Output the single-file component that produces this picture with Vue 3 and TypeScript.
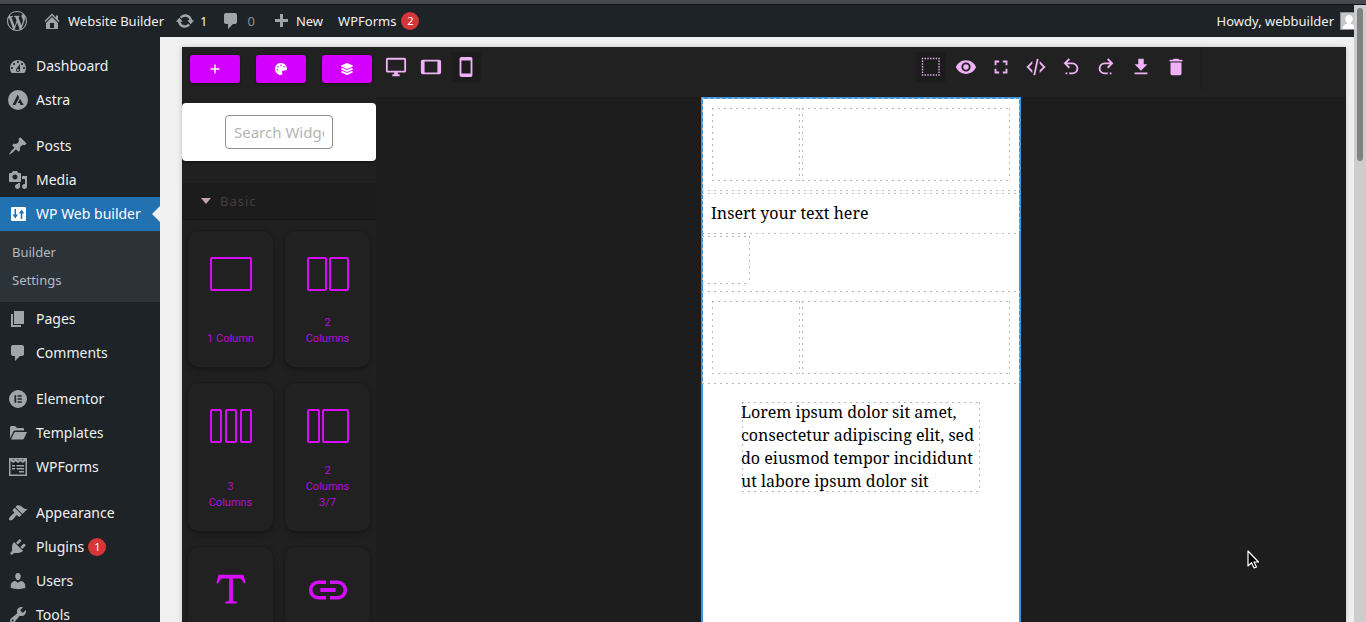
<script setup lang="ts">
import { ref } from 'vue'

interface Shape { d: string; box?: string }
interface MenuItem { label: string; icon: string; active?: boolean; badge?: number; children?: string[] }
interface Rect { x: number; w: number }
interface Block { label: string; cols?: Rect[]; d?: string }

const dash: Record<string, Shape> = {
  wordpress: { d: 'M20 10c0-5.51-4.49-10-10-10C4.48 0 0 4.49 0 10c0 5.52 4.48 10 10 10 5.51 0 10-4.48 10-10zM7.78 15.37L4.37 6.22c.55-.02 1.17-.08 1.17-.08.5-.06.44-1.13-.06-1.11 0 0-1.45.11-2.37.11-.18 0-.37 0-.58-.01C4.12 2.69 6.87 1.11 10 1.11c2.33 0 4.45.87 6.05 2.34-.68-.11-1.65.39-1.65 1.58 0 .74.45 1.36.9 2.1.35.61.55 1.36.55 2.46 0 1.49-1.4 5-1.4 5l-3.03-8.37c.54-.02.82-.17.82-.17.5-.05.44-1.25-.06-1.22 0 0-1.44.12-2.38.12-.87 0-2.33-.12-2.33-.12-.5-.03-.56 1.2-.06 1.22l.92.08 1.26 3.41zM17.41 10c.24-.64.74-1.87.43-4.25.7 1.29 1.05 2.71 1.05 4.25 0 3.29-1.73 6.24-4.4 7.78.97-2.59 1.94-5.2 2.92-7.78zM6.1 18.09C3.12 16.65 1.11 13.53 1.11 10c0-1.3.23-2.48.72-3.59C3.25 10.3 4.67 14.2 6.1 18.09zm4.03-6.63l2.58 6.98c-.86.29-1.76.45-2.71.45-.79 0-1.57-.11-2.29-.33.81-2.38 1.62-4.74 2.42-7.1z' },
  home: { d: 'M16 8.5l1.53 1.53-1.06 1.06L10 4.6l-6.47 6.49-1.06-1.06L10 2.5l4 4v-2h2v4zm-6-2.46l6 5.99V18H4v-5.97zM12 17v-5H8v5h4z' },
  update: { d: 'M10.2 3.28c3.53 0 6.43 2.61 6.92 6h2.08l-3.5 4-3.5-4h2.32c-.45-1.97-2.21-3.45-4.32-3.45-1.45 0-2.73.71-3.54 1.78L4.95 5.66C6.23 4.2 8.11 3.28 10.2 3.28zm-.4 13.44c-3.52 0-6.43-2.61-6.92-6H.8l3.5-4c1.17 1.33 2.33 2.67 3.5 4H5.48c.45 1.97 2.21 3.45 4.32 3.45 1.45 0 2.73-.71 3.54-1.78l1.71 1.95c-1.28 1.46-3.15 2.38-5.25 2.38z' },
  comments: { d: 'M5 2h9c1.1 0 2 .9 2 2v7c0 1.1-.9 2-2 2h-2l-5 5v-5H5c-1.1 0-2-.9-2-2V4c0-1.1.9-2 2-2z' },
  plus: { d: 'M17 8v3h-5v5H9v-5H4V8h5V3h3v5h5z' },
  dashboard: { d: 'M3.76 17h12.48c1.1-1.37 1.76-3.11 1.76-5 0-4.42-3.58-8-8-8s-8 3.58-8 8c0 1.89.66 3.63 1.76 5zM10 5c.55 0 1 .45 1 1s-.45 1-1 1-1-.45-1-1 .45-1 1-1zM6 7c.55 0 1 .45 1 1s-.45 1-1 1-1-.45-1-1 .45-1 1-1zm8 0c.55 0 1 .45 1 1s-.45 1-1 1-1-.45-1-1 .45-1 1-1zm-5.37 5.55L12 8v6c0 1.1-.9 2-2 2s-2-.9-2-2c0-.57.24-1.08.63-1.45zM4 11c.55 0 1 .45 1 1s-.45 1-1 1-1-.45-1-1 .45-1 1-1zm12 0c.55 0 1 .45 1 1s-.45 1-1 1-1-.45-1-1 .45-1 1-1zm-5 3c0-.55-.45-1-1-1s-1 .45-1 1 .45 1 1 1 1-.45 1-1z' },
  astra: { d: 'M10 0a10 10 0 1 0 0 20a10 10 0 0 0 0-20zM9.7 4.6l1.5 3.1L7.4 15H4.5zM12 8.8l3.6 6.2h-3l-.9-1.9H9.8z' },
  posts: { d: 'M10.44 3.02l1.82-1.82 6.36 6.35-1.83 1.82c-1.05-.68-2.48-.57-3.41.36l-.75.75c-.92.93-1.04 2.35-.35 3.41l-1.83 1.82-2.41-2.41-2.8 2.79c-.42.42-3.38 2.71-3.8 2.29s1.86-3.39 2.28-3.81l2.79-2.79L4.1 9.36l1.83-1.82c1.05.69 2.48.57 3.4-.36l.75-.75c.93-.92 1.05-2.35.36-3.41z' },
  media: { d: 'M13 11V4c0-.55-.45-1-1-1h-1.67L9 1H5L3.67 3H2c-.55 0-1 .45-1 1v7c0 .55.45 1 1 1h10c.55 0 1-.45 1-1zM7 4.5c1.38 0 2.5 1.12 2.5 2.5S8.38 9.5 7 9.5 4.5 8.38 4.5 7 5.62 4.5 7 4.5zM14 6h5v10.5c0 1.38-1.12 2.5-2.5 2.5S14 17.88 14 16.5s1.12-2.5 2.5-2.5c.17 0 .34.02.5.05V9h-3V6zm-4 8.05V13h2v3.5c0 1.38-1.12 2.5-2.5 2.5S7 17.88 7 16.5 8.12 14 9.5 14c.17 0 .34.02.5.05z' },
  builder: { d: 'M4 3h13a1 1 0 0 1 1 1v12a1 1 0 0 1-1 1H4a1 1 0 0 1-1-1V4a1 1 0 0 1 1-1zM6.500 5v5.500H4.500L7.300 14.500 10 10.500H8V5zM13.500 5.500L10.800 9.500h2V15h1.500V9.500h2z' },
  pages: { d: 'M6 15V2h10v13H6zm-1 1h8v2H3V5h2v11z' },
  elementor: { d: 'M10 1a9 9 0 1 0 0 18a9 9 0 0 0 0-18zM6.500 6.200h1.700v7.600H6.500zM9.600 6.200h4.200v1.600H9.600zM9.600 9.200h4.200v1.600H9.600zM9.600 12.200h4.200v1.600H9.600z' },
  templates: { d: 'M2 15.500V4.500Q2 3 3.500 3H7l2 2h6q1 0 1 1v1.500H7.500Q6 7.500 5.200 8.800zM3 16.500L6 10q.5-1 1.600-1H19l-3 6.500q-.5 1-1.600 1z' },
  wpforms: { d: 'M1 1h18v18H1zM2.500 4v13.500h15V4l-2.800 2L12.500 4.200 10 6 7.500 4.200 5.300 6zM4.200 2.500l1.200 1 1.400-1zM8.500 2.500l1.500 1 1.500-1zM13.200 2.500l1.400 1 1.200-1zM4 8h3v1.500H4zM8.500 8H16v1.500H8.500zM4 11h3v1.500H4zM8.500 11H16v1.500H8.500zM11 14h5v1.500h-5z' },
  appearance: { d: 'M14.48 11.06L7.41 3.99l1.5-1.5c.5-.56 2.3-.47 3.51.32 1.21.8 1.43 1.28 2.91 2.1 1.18.64 2.45 1.26 4.45.85zm-.71.71L6.7 4.7 4.93 6.47c-.39.39-.39 1.02 0 1.41l1.06 1.06c.39.39.39 1.03 0 1.42-.6.6-1.43 1.11-2.21 1.69-.35.26-.7.53-1.01.84C1.43 14.23.4 16.08 1.4 17.07c.99 1 2.84-.03 4.18-1.36.31-.31.58-.66.85-1.02.57-.78 1.08-1.61 1.69-2.21.39-.39 1.02-.39 1.41 0l1.06 1.06c.39.39 1.02.39 1.41 0z' },
  plugins: { d: 'M13.11 4.36L9.87 7.6 8 5.73l3.24-3.24c.35-.34 1.05-.2 1.56.32.52.51.66 1.21.31 1.55zm-8 1.77l.91-1.12 9.01 9.01-1.19.84c-.71.71-2.63 1.16-3.82 1.16H6.14L4.9 17.26c-.59.59-1.54.59-2.12 0-.59-.58-.59-1.53 0-2.12l1.24-1.24v-3.88c0-1.13.4-3.19 1.09-3.89zm7.26 3.97l3.24-3.24c.34-.35 1.04-.21 1.55.31.52.51.66 1.21.31 1.55l-3.24 3.25z' },
  users: { d: 'M10 9.25c-2.27 0-2.73-3.44-2.73-3.44C7 4.02 7.82 2 9.97 2c2.16 0 2.98 2.02 2.71 3.81 0 0-.41 3.44-2.68 3.44zm0 2.57L12.72 10c2.39 0 4.52 2.33 4.52 4.53v2.49s-3.65 1.13-7.24 1.13c-3.65 0-7.24-1.13-7.24-1.13v-2.49c0-2.25 1.94-4.48 4.47-4.48z' },
  tools: { d: 'M16.68 9.77c-1.34 1.34-3.3 1.67-4.95.99l-5.41 6.52c-.99.99-2.59.99-3.58 0s-.99-2.59 0-3.57l6.52-5.42c-.68-1.65-.35-3.61.99-4.95 1.28-1.28 3.12-1.62 4.72-1.06l-2.89 2.89 2.82 2.82 2.86-2.87c.53 1.58.18 3.39-1.08 4.65zM3.81 16.21c.4.39 1.04.39 1.43 0 .4-.4.4-1.04 0-1.43-.39-.4-1.03-.4-1.43 0-.39.39-.39 1.03 0 1.43z' },
}

const groups: MenuItem[][] = [
  [{ label: 'Dashboard', icon: 'dashboard' }, { label: 'Astra', icon: 'astra' }],
  [
    { label: 'Posts', icon: 'posts' },
    { label: 'Media', icon: 'media' },
    { label: 'WP Web builder', icon: 'builder', active: true, children: ['Builder', 'Settings'] },
    { label: 'Pages', icon: 'pages' },
    { label: 'Comments', icon: 'comments' },
  ],
  [{ label: 'Elementor', icon: 'elementor' }, { label: 'Templates', icon: 'templates' }, { label: 'WPForms', icon: 'wpforms' }],
  [
    { label: 'Appearance', icon: 'appearance' },
    { label: 'Plugins', icon: 'plugins', badge: 1 },
    { label: 'Users', icon: 'users' },
    { label: 'Tools', icon: 'tools' },
  ],
]

const panelButtons = [
  { name: 'Add block', box: '0 0 448 512', d: 'M416 226H254V64h-60v162H32v60h162v162h60V286h162z' },
  { name: 'Styles', box: '0 0 512 512', d: 'M204.3 5C104.9 24.4 24.8 104.3 5.2 203.4c-37 187 131.7 326.4 258.8 306.7 41.2-6.4 61.4-54.6 42.5-91.7-23.1-45.4 9.9-98.4 60.9-98.4h79.7c35.8 0 64.8-29.6 64.9-65.3C511.5 97.1 368.1-26.9 204.3 5zM96 320c-17.7 0-32-14.3-32-32s14.3-32 32-32 32 14.3 32 32-14.3 32-32 32zm32-128c-17.7 0-32-14.3-32-32s14.3-32 32-32 32 14.3 32 32-14.3 32-32 32zm128-64c-17.7 0-32-14.3-32-32s14.3-32 32-32 32 14.3 32 32-14.3 32-32 32zm128 64c-17.7 0-32-14.3-32-32s14.3-32 32-32 32 14.3 32 32-14.3 32-32 32z' },
  { name: 'Layers', box: '0 0 512 512', d: 'M12.41 148.02l232.94 105.67c6.8 3.09 14.49 3.09 21.29 0l232.94-105.67c16.55-7.51 16.55-32.52 0-40.03L266.65 2.31a25.607 25.607 0 0 0-21.29 0L12.41 107.98c-16.55 7.51-16.55 32.53 0 40.04zm487.18 88.28l-58.09-26.33-161.64 73.27c-7.56 3.43-15.59 5.17-23.86 5.17s-16.29-1.74-23.86-5.17L70.51 209.97l-58.1 26.33c-16.55 7.5-16.55 32.5 0 40l232.94 105.59c6.8 3.08 14.49 3.08 21.29 0L499.59 276.3c16.55-7.5 16.55-32.5 0-40zm0 127.8l-57.87-26.23-161.86 73.37c-7.56 3.43-15.59 5.17-23.86 5.17s-16.29-1.74-23.86-5.17L70.29 337.87 12.41 364.1c-16.55 7.5-16.55 32.5 0 40l232.94 105.59c6.8 3.08 14.49 3.08 21.29 0L499.59 404.1c16.55-7.5 16.55-32.5 0-40z' },
]

const devices = [
  { name: 'Desktop', d: 'M21,16H3V4H21M21,2H3C1.89,2 1,2.89 1,4V16A2,2 0 0,0 3,18H10V20H8V22H16V20H14V18H21A2,2 0 0,0 23,16V4C23,2.89 22.1,2 21,2Z' },
  { name: 'Tablet', d: 'M19,18H5V6H19M21,4H3C1.89,4 1,4.89 1,6V18A2,2 0 0,0 3,20H21A2,2 0 0,0 23,18V6C23,4.89 22.1,4 21,4Z' },
  { name: 'Mobile', d: 'M17,19H7V5H17M17,1H7C5.89,1 5,1.89 5,3V21A2,2 0 0,0 7,23H17A2,2 0 0,0 19,21V3C19,1.89 18.1,1 17,1Z' },
]
const device = ref('Mobile')

// Dotted square used for the "show borders" toggle
const dots = [3, 6, 9, 12, 15, 18, 21].map(n => `M${n - 1},2h1.500v1.500h-1.500zM${n - 1},20h1.500v1.500h-1.500zM2,${n - 1}h1.500v1.500h-1.500zM20,${n - 1}h1.500v1.500h-1.500z`).join('')

const actions = [
  { name: 'Borders', d: dots, on: true },
  { name: 'Preview', d: 'M12,9A3,3 0 0,0 9,12A3,3 0 0,0 12,15A3,3 0 0,0 15,12A3,3 0 0,0 12,9M12,17A5,5 0 0,1 7,12A5,5 0 0,1 12,7A5,5 0 0,1 17,12A5,5 0 0,1 12,17M12,4.5C7,4.5 2.73,7.61 1,12C2.73,16.39 7,19.5 12,19.5C17,19.5 21.27,16.39 23,12C21.27,7.61 17,4.5 12,4.5Z' },
  { name: 'Fullscreen', d: 'M5,5H10V7H7V10H5V5M14,5H19V10H17V7H14V5M17,14H19V19H14V17H17V14M10,17V19H5V14H7V17H10Z' },
  { name: 'Code', d: 'M12.89,3L14.85,3.4L11.11,21L9.15,20.6L12.89,3M19.59,12L16,8.41V5.58L22.42,12L16,18.41V15.58L19.59,12M1.58,12L8,5.58V8.41L4.41,12L8,15.58V18.41L1.58,12Z' },
  { name: 'Undo', d: 'M13.5,7A6.5,6.5 0 0,1 20,13.5A6.5,6.5 0 0,1 13.5,20H10V18H13.5C16,18 18,16 18,13.5C18,11 16,9 13.5,9H7.83L10.91,12.09L9.5,13.5L4,8L9.5,2.5L10.92,3.91L7.83,7H13.5M6,18H8V20H6V18Z' },
  { name: 'Redo', d: 'M10.5,7A6.5,6.5 0 0,0 4,13.5A6.5,6.5 0 0,0 10.5,20H14V18H10.5C8,18 6,16 6,13.5C6,11 8,9 10.5,9H16.17L13.09,12.09L14.5,13.5L20,8L14.5,2.5L13.08,3.91L16.17,7H10.5M18,18H16V20H18V18Z' },
  { name: 'Import', d: 'M5,20H19V18H5M19,9H15V3H9V9H5L12,16L19,9Z' },
  { name: 'Clear', d: 'M19,4H15.5L14.5,3H9.5L8.5,4H5V6H19M6,19A2,2 0 0,0 8,21H16A2,2 0 0,0 18,19V7H6V19Z' },
]

const blocks: Block[] = [
  { label: '1 Column', cols: [{ x: 3, w: 40 }] },
  { label: '2 Columns', cols: [{ x: 3, w: 18 }, { x: 25, w: 18 }] },
  { label: '3 Columns', cols: [{ x: 3, w: 10 }, { x: 18, w: 10 }, { x: 33, w: 10 }] },
  { label: '2 Columns 3/7', cols: [{ x: 3, w: 11 }, { x: 18, w: 25 }] },
  { label: 'Text', d: 'M18.5,4L19.66,8.35L18.7,8.61C18.25,7.74 17.79,6.87 17.26,6.43C16.73,6 16.11,6 15.5,6H13V16.5C13,17 13,17.5 13.33,17.75C13.67,18 14.33,18 15,18V19H9V18C9.67,18 10.33,18 10.67,17.75C11,17.5 11,17 11,16.5V6H8.5C7.89,6 7.27,6 6.74,6.43C6.21,6.87 5.75,7.74 5.3,8.61L4.34,8.35L5.5,4H18.5Z' },
  { label: 'Link', d: 'M3.9,12C3.9,10.29 5.29,8.9 7,8.9H11V7H7A5,5 0 0,0 2,12A5,5 0 0,0 7,17H11V15.1H7C5.29,15.1 3.9,13.71 3.9,12M8,13H16V11H8V13M17,7H13V8.9H17C18.71,8.9 20.1,10.29 20.1,12C20.1,13.71 18.71,15.1 17,15.1H13V17H17A5,5 0 0,0 22,12A5,5 0 0,0 17,7Z' },
]
const search = ref('')
const open = ref(true)
</script>

<template>
  <div class="app">
    <div class="chrome"></div>
    <div class="window">
      <div class="admin">
        <header class="bar">
          <a href="#" class="wp" aria-label="About WordPress"><svg viewBox="0 0 20 20"><path :d="dash.wordpress.d" /></svg></a>
          <a href="#" class="site"><svg viewBox="0 0 20 20"><path fill-rule="evenodd" :d="dash.home.d" /></svg>Website Builder</a>
          <a href="#" class="updates"><svg viewBox="0 0 20 20"><path :d="dash.update.d" /></svg>1</a>
          <a href="#" class="replies"><svg viewBox="0 0 20 20"><path :d="dash.comments.d" /></svg><span>0</span></a>
          <a href="#" class="new"><svg viewBox="0 0 20 20"><path :d="dash.plus.d" /></svg>New</a>
          <a href="#" class="forms">WPForms<span class="badge">2</span></a>
          <a href="#" class="account">Howdy, webbuilder
            <svg viewBox="0 0 18 18" class="avatar"><path fill="#8c8f94" d="M0 0h18v18H0z" /><path fill="#c4c6c7" d="M1 1h16v16H1z" /><path fill="#fff" d="M9 3a3.800 3.800 0 0 1 3.800 4c0 1.500-.8 3-1.800 3.700v1c2.500.6 4 1.800 4.500 5.300h-13c.5-3.500 2-4.700 4.500-5.300v-1C6 10 5.200 8.500 5.200 7A3.800 3.800 0 0 1 9 3z" /></svg>
          </a>
        </header>
        <div class="body">
          <nav class="menu">
            <ul v-for="(group, g) in groups" :key="g">
              <li v-for="item in group" :key="item.label">
                <a href="#" class="item" :class="{ active: item.active }">
                  <svg viewBox="0 0 20 20"><path fill-rule="evenodd" :d="dash[item.icon].d" /></svg>
                  <span>{{ item.label }}</span>
                  <span v-if="item.badge" class="badge">{{ item.badge }}</span>
                </a>
                <ul v-if="item.children" class="sub">
                  <li v-for="child in item.children" :key="child"><a href="#">{{ child }}</a></li>
                </ul>
              </li>
            </ul>
          </nav>

          <main class="content">
            <div class="editor">
              <div class="toolbar">
                <div class="switches">
                  <button v-for="b in panelButtons" :key="b.name" type="button" :aria-label="b.name">
                    <svg :viewBox="b.box"><path :d="b.d" /></svg>
                  </button>
                </div>
                <div class="tools">
                  <button v-for="d in devices" :key="d.name" type="button" :aria-label="d.name" :class="{ on: device === d.name }" @click="device = d.name">
                    <svg viewBox="0 0 24 24"><path fill-rule="evenodd" :d="d.d" /></svg>
                  </button>
                </div>
                <div class="tools actions">
                  <button v-for="a in actions" :key="a.name" type="button" :aria-label="a.name" :class="{ on: a.on }">
                    <svg viewBox="0 0 24 24"><path :d="a.d" /></svg>
                  </button>
                </div>
                <div class="views"></div>
              </div>

              <div class="work">
                <aside class="blocks">
                  <div class="search"><input v-model="search" type="text" placeholder="Search Widgets" aria-label="Search Widgets"></div>
                  <button type="button" class="category" @click="open = !open">
                    <svg viewBox="0 0 10 6"><path d="M0 0h10L5 6z" /></svg>Basic
                  </button>
                  <div v-if="open" class="grid">
                    <button v-for="b in blocks" :key="b.label" type="button" class="block" :aria-label="b.label">
                      <svg v-if="b.cols" viewBox="0 0 46 46"><rect v-for="c in b.cols" :key="c.x" :x="c.x" y="7" :width="c.w" height="32" rx="1" /></svg>
                      <svg v-else viewBox="0 0 24 24" class="solid"><path :d="b.d" /></svg>
                      <span v-if="b.cols">{{ b.label }}</span>
                    </button>
                  </div>
                </aside>
                <section class="canvas">
                  <div class="frame">
                    <div class="row dashed"><div class="cell narrow dashed"></div><div class="cell wide dashed"></div></div>
                    <div class="text dashed">Insert your text here</div>
                    <div class="strip"><div class="cell small dashed"></div></div>
                    <div class="row dashed"><div class="cell narrow dashed"></div><div class="cell wide dashed"></div></div>
                    <p class="quote dashed">Lorem ipsum dolor sit amet, consectetur adipiscing elit, sed do eiusmod tempor incididunt ut labore ipsum dolor sit</p>
                  </div>
                </section>
              </div>
            </div>
          </main>
        </div>
      </div>
      <div class="scroll"><div class="thumb"></div></div>
    </div>
    <svg class="pointer" viewBox="0 0 12 20"><path d="M1 1v15l3.500-3.300 2.600 5.300 2.400-1-2.600-5h4.600z" fill="#000" stroke="#fff" stroke-width="1.200" stroke-linejoin="round" /></svg>
  </div>
</template>

<style>
html, body { margin: 0; background: #1d2327; }
</style>

<style scoped>
* { box-sizing: border-box; }
.app { position: relative; height: 100vh; overflow: hidden; display: flex; flex-direction: column; font: 13px/18px "Noto Sans", sans-serif; color: #f0f0f1; }
a { color: inherit; text-decoration: none; }
ul { list-style: none; margin: 0; padding: 0; }
button { font: inherit; border: 0; padding: 0; background: none; color: inherit; cursor: pointer; }
svg { display: block; flex: none; fill: currentColor; }
.chrome { flex: none; height: 5px; background: #46494e; border-bottom: 1px solid #111517; }
.window { flex: 1; min-height: 0; display: flex; }
.admin { flex: 1; min-width: 0; display: flex; flex-direction: column; }

.bar { flex: none; height: 32px; background: #1d2327; display: flex; align-items: center; padding-left: 7px; overflow: hidden; }
.bar a { display: flex; align-items: center; white-space: nowrap; }
.bar svg { width: 20px; height: 20px; color: #a0a5aa; }
.bar .site { margin-left: 15px; gap: 6px; }
.bar .updates { margin-left: 11px; gap: 5px; }
.bar .replies { margin-left: 14px; gap: 6px; }
.bar .replies span { color: #8c8f94; }
.bar .new { margin-left: 16px; gap: 5px; }
.bar .forms { margin-left: 15px; gap: 5px; }
.bar .account { margin-left: auto; margin-right: -4px; gap: 6px; }
.bar .avatar { width: 18px; height: 18px; }
.badge { min-width: 18px; height: 18px; border-radius: 9px; background: #d63638; color: #fff; font-size: 11px; line-height: 18px; text-align: center; }

.body { flex: 1; min-height: 0; display: flex; }
.menu { flex: none; width: 160px; padding-top: 12px; background: #1d2327; font-size: 14px; overflow: hidden; display: flex; flex-direction: column; gap: 12px; }
.item { position: relative; display: flex; align-items: center; height: 34px; padding-left: 8px; }
.item svg { width: 20px; height: 20px; margin-right: 8px; color: #a0a5aa; }
.item .badge { margin-left: 4px; }
.item.active { background: #2271b1; color: #fff; }
.item.active svg { color: #fff; }
.item.active::after { content: ""; position: absolute; right: 0; border: 8px solid transparent; border-left: 0; border-right-color: #f0f0f1; }
.sub { background: #2c3338; padding: 7px 12px 8px; font-size: 13px; line-height: 28px; color: #b4b9be; }
.sub a { display: block; }

.content { flex: 1; min-width: 0; display: flex; background: #f0f0f1; padding: 10px 8px 0 22px; }
.editor { flex: 1; min-width: 0; display: flex; flex-direction: column; background: #1d1d1d; color: #f0b1f8; box-shadow: 0 0 5px rgba(0, 0, 0, .2); }
.toolbar { flex: none; height: 50px; display: flex; background: #212121; }
.switches { width: 194px; padding: 8px 4px 8px 8px; display: flex; gap: 16px; }
.switches button { width: 50px; height: 28px; border-radius: 3px; background: #d400ff; color: #fff; display: grid; place-items: center; box-shadow: 0 1px 3px rgba(0, 0, 0, .4); }
.switches svg { width: 12px; height: 12px; }
.tools { display: flex; gap: 5px; padding: 5px; }
.tools button { width: 30px; height: 30px; border-radius: 2px; display: grid; place-items: center; }
.tools .on { background: #1c1c1c; }
.tools svg { width: 22px; height: 22px; }
.actions { margin-left: auto; margin-right: 4px; }
.views { width: 146px; height: 43px; border-left: 2px solid #1f1f1f; border-bottom: 1px solid #1f1f1f; }
.work { flex: 1; min-height: 0; display: flex; }

.blocks { flex: none; width: 194px; padding-top: 6px; background: #202020; overflow: hidden; }
.search { height: 58px; margin-bottom: 22px; background: #fff; border-radius: 4px; display: grid; place-items: center; box-shadow: 0 1px 3px rgba(0, 0, 0, .5); }
.search input { width: 108px; height: 34px; padding: 0 8px; border: 1px solid #8c8f94; border-radius: 4px; background: #fff; font: 15px/24px "Noto Sans", sans-serif; color: #2c3338; }
.search input::placeholder { color: #b5b5b5; opacity: 1; }
.category { width: 100%; height: 37px; padding-left: 19px; display: flex; align-items: center; gap: 9px; background: #1c1c1c; border-bottom: 1px solid #171717; color: #453e3e; letter-spacing: 1px; }
.category svg { width: 10px; height: 6px; color: #c7a3a3; }
.grid { display: grid; grid-template-columns: 1fr 1fr; gap: 16px 12px; padding: 11px 6px; }
.block { min-height: 136px; padding: 20px 19px; border-radius: 10px; background: #212121; color: #d50dfb; box-shadow: 0 3px 6px rgba(0, 0, 0, .3), 0 0 2px rgba(0, 0, 0, .2); display: flex; flex-direction: column; justify-content: space-between; align-items: center; gap: 14px; }
.block svg { width: 46px; height: 46px; fill: none; stroke: currentColor; stroke-width: 2; }
.block .solid { fill: currentColor; stroke: none; }
.block span { font: 11px/16px Roboto, "Liberation Sans", sans-serif; color: #b70bd8; }

.canvas { flex: 1; display: flex; justify-content: center; overflow: hidden; }
.frame { width: 320px; background: #fff; box-shadow: inset 2px 0 #3b97e3, inset -2px 0 #3b97e3, inset 0 2px #3b97e3; color: #000; font: 16px/23px "Noto Serif", "Droid Serif", "DejaVu Serif", serif; }
.dashed { position: relative; }
.dashed::after {
  content: "";
  position: absolute;
  inset: 1px;
  pointer-events: none;
  --h: repeating-linear-gradient(90deg, #b8b8b8 0 2px, transparent 2px 6px);
  --v: repeating-linear-gradient(180deg, #b8b8b8 0 2px, transparent 2px 6px);
  background: var(--h) top / 100% 1px no-repeat, var(--h) bottom / 100% 1px no-repeat, var(--v) left / 1px 100% no-repeat, var(--v) right / 1px 100% no-repeat;
}
.row { display: flex; padding: 10px; }
.cell { height: 75px; }
.narrow { flex: 3; }
.wide { flex: 7; }
.text { padding: 10px; }
.strip { height: 55px; }
.small { width: 50px; height: 50px; }
.quote { margin: 16px 40px 0; }

.scroll { flex: none; width: 12px; padding: 3px; background: #cdcdcd; }
.thumb { height: 25%; border-radius: 3px; background: #7d8382; }
.pointer { position: absolute; left: 1247px; top: 550px; width: 12px; height: 20px; }
</style>
